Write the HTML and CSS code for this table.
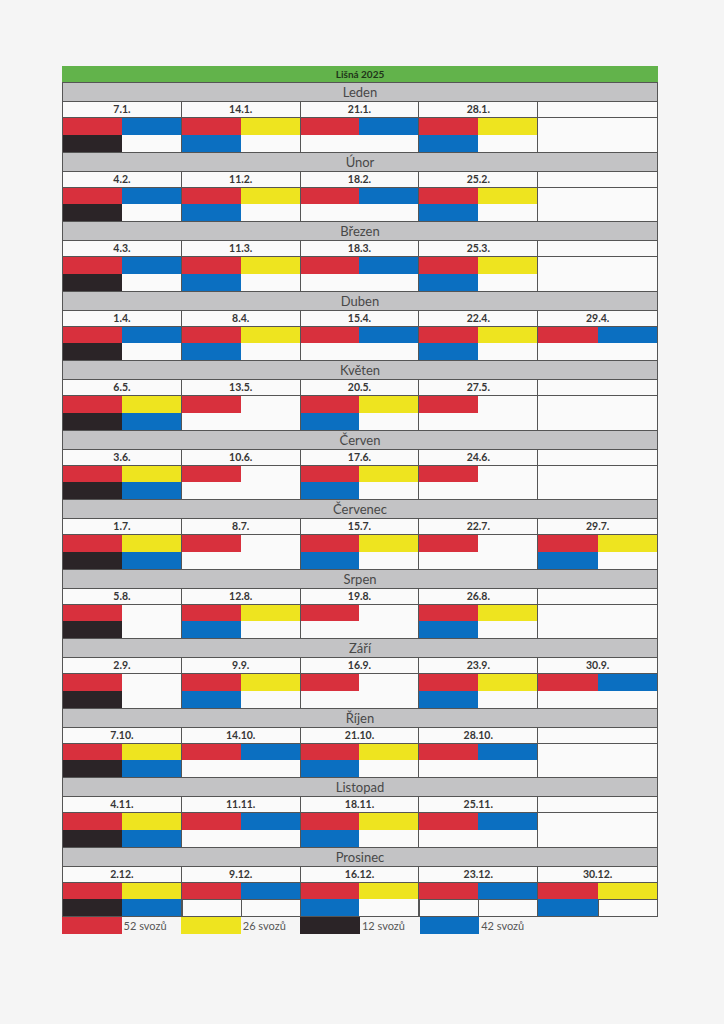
FILE: index.html
```html
<!DOCTYPE html>
<html lang="cs">
<head>
<meta charset="utf-8">
<title>Lišná 2025</title>
<link rel="stylesheet" href="styles.css">
</head>
<body>
<div class="page">
  <div class="title">Lišná 2025</div>
  <div class="sheet">

    <div class="mhead">Leden</div>
    <div class="days">
      <div class="day"><div class="date">7.1.</div><div class="sw"><i class="r"></i><i class="b"></i><i class="k"></i><i></i></div></div>
      <div class="day"><div class="date">14.1.</div><div class="sw"><i class="r"></i><i class="y"></i><i class="b"></i><i></i></div></div>
      <div class="day"><div class="date">21.1.</div><div class="sw"><i class="r"></i><i class="b"></i><i></i><i></i></div></div>
      <div class="day"><div class="date">28.1.</div><div class="sw"><i class="r"></i><i class="y"></i><i class="b"></i><i></i></div></div>
      <div class="day"><div class="date"></div><div class="sw"><i></i><i></i><i></i><i></i></div></div>
    </div>

    <div class="mhead">Únor</div>
    <div class="days">
      <div class="day"><div class="date">4.2.</div><div class="sw"><i class="r"></i><i class="b"></i><i class="k"></i><i></i></div></div>
      <div class="day"><div class="date">11.2.</div><div class="sw"><i class="r"></i><i class="y"></i><i class="b"></i><i></i></div></div>
      <div class="day"><div class="date">18.2.</div><div class="sw"><i class="r"></i><i class="b"></i><i></i><i></i></div></div>
      <div class="day"><div class="date">25.2.</div><div class="sw"><i class="r"></i><i class="y"></i><i class="b"></i><i></i></div></div>
      <div class="day"><div class="date"></div><div class="sw"><i></i><i></i><i></i><i></i></div></div>
    </div>

    <div class="mhead">Březen</div>
    <div class="days">
      <div class="day"><div class="date">4.3.</div><div class="sw"><i class="r"></i><i class="b"></i><i class="k"></i><i></i></div></div>
      <div class="day"><div class="date">11.3.</div><div class="sw"><i class="r"></i><i class="y"></i><i class="b"></i><i></i></div></div>
      <div class="day"><div class="date">18.3.</div><div class="sw"><i class="r"></i><i class="b"></i><i></i><i></i></div></div>
      <div class="day"><div class="date">25.3.</div><div class="sw"><i class="r"></i><i class="y"></i><i class="b"></i><i></i></div></div>
      <div class="day"><div class="date"></div><div class="sw"><i></i><i></i><i></i><i></i></div></div>
    </div>

    <div class="mhead">Duben</div>
    <div class="days">
      <div class="day"><div class="date">1.4.</div><div class="sw"><i class="r"></i><i class="b"></i><i class="k"></i><i></i></div></div>
      <div class="day"><div class="date">8.4.</div><div class="sw"><i class="r"></i><i class="y"></i><i class="b"></i><i></i></div></div>
      <div class="day"><div class="date">15.4.</div><div class="sw"><i class="r"></i><i class="b"></i><i></i><i></i></div></div>
      <div class="day"><div class="date">22.4.</div><div class="sw"><i class="r"></i><i class="y"></i><i class="b"></i><i></i></div></div>
      <div class="day"><div class="date">29.4.</div><div class="sw"><i class="r"></i><i class="b"></i><i></i><i></i></div></div>
    </div>

    <div class="mhead">Květen</div>
    <div class="days">
      <div class="day"><div class="date">6.5.</div><div class="sw"><i class="r"></i><i class="y"></i><i class="k"></i><i class="b"></i></div></div>
      <div class="day"><div class="date">13.5.</div><div class="sw"><i class="r"></i><i></i><i></i><i></i></div></div>
      <div class="day"><div class="date">20.5.</div><div class="sw"><i class="r"></i><i class="y"></i><i class="b"></i><i></i></div></div>
      <div class="day"><div class="date">27.5.</div><div class="sw"><i class="r"></i><i></i><i></i><i></i></div></div>
      <div class="day"><div class="date"></div><div class="sw"><i></i><i></i><i></i><i></i></div></div>
    </div>

    <div class="mhead">Červen</div>
    <div class="days">
      <div class="day"><div class="date">3.6.</div><div class="sw"><i class="r"></i><i class="y"></i><i class="k"></i><i class="b"></i></div></div>
      <div class="day"><div class="date">10.6.</div><div class="sw"><i class="r"></i><i></i><i></i><i></i></div></div>
      <div class="day"><div class="date">17.6.</div><div class="sw"><i class="r"></i><i class="y"></i><i class="b"></i><i></i></div></div>
      <div class="day"><div class="date">24.6.</div><div class="sw"><i class="r"></i><i></i><i></i><i></i></div></div>
      <div class="day"><div class="date"></div><div class="sw"><i></i><i></i><i></i><i></i></div></div>
    </div>

    <div class="mhead">Červenec</div>
    <div class="days">
      <div class="day"><div class="date">1.7.</div><div class="sw"><i class="r"></i><i class="y"></i><i class="k"></i><i class="b"></i></div></div>
      <div class="day"><div class="date">8.7.</div><div class="sw"><i class="r"></i><i></i><i></i><i></i></div></div>
      <div class="day"><div class="date">15.7.</div><div class="sw"><i class="r"></i><i class="y"></i><i class="b"></i><i></i></div></div>
      <div class="day"><div class="date">22.7.</div><div class="sw"><i class="r"></i><i></i><i></i><i></i></div></div>
      <div class="day"><div class="date">29.7.</div><div class="sw"><i class="r"></i><i class="y"></i><i class="b"></i><i></i></div></div>
    </div>

    <div class="mhead">Srpen</div>
    <div class="days">
      <div class="day"><div class="date">5.8.</div><div class="sw"><i class="r"></i><i></i><i class="k"></i><i></i></div></div>
      <div class="day"><div class="date">12.8.</div><div class="sw"><i class="r"></i><i class="y"></i><i class="b"></i><i></i></div></div>
      <div class="day"><div class="date">19.8.</div><div class="sw"><i class="r"></i><i></i><i></i><i></i></div></div>
      <div class="day"><div class="date">26.8.</div><div class="sw"><i class="r"></i><i class="y"></i><i class="b"></i><i></i></div></div>
      <div class="day"><div class="date"></div><div class="sw"><i></i><i></i><i></i><i></i></div></div>
    </div>

    <div class="mhead">Září</div>
    <div class="days">
      <div class="day"><div class="date">2.9.</div><div class="sw"><i class="r"></i><i></i><i class="k"></i><i></i></div></div>
      <div class="day"><div class="date">9.9.</div><div class="sw"><i class="r"></i><i class="y"></i><i class="b"></i><i></i></div></div>
      <div class="day"><div class="date">16.9.</div><div class="sw"><i class="r"></i><i></i><i></i><i></i></div></div>
      <div class="day"><div class="date">23.9.</div><div class="sw"><i class="r"></i><i class="y"></i><i class="b"></i><i></i></div></div>
      <div class="day"><div class="date">30.9.</div><div class="sw"><i class="r"></i><i class="b"></i><i></i><i></i></div></div>
    </div>

    <div class="mhead">Říjen</div>
    <div class="days">
      <div class="day"><div class="date">7.10.</div><div class="sw"><i class="r"></i><i class="y"></i><i class="k"></i><i class="b"></i></div></div>
      <div class="day"><div class="date">14.10.</div><div class="sw"><i class="r"></i><i class="b"></i><i></i><i></i></div></div>
      <div class="day"><div class="date">21.10.</div><div class="sw"><i class="r"></i><i class="y"></i><i class="b"></i><i></i></div></div>
      <div class="day"><div class="date">28.10.</div><div class="sw"><i class="r"></i><i class="b"></i><i></i><i></i></div></div>
      <div class="day"><div class="date"></div><div class="sw"><i></i><i></i><i></i><i></i></div></div>
    </div>

    <div class="mhead">Listopad</div>
    <div class="days">
      <div class="day"><div class="date">4.11.</div><div class="sw"><i class="r"></i><i class="y"></i><i class="k"></i><i class="b"></i></div></div>
      <div class="day"><div class="date">11.11.</div><div class="sw"><i class="r"></i><i class="b"></i><i></i><i></i></div></div>
      <div class="day"><div class="date">18.11.</div><div class="sw"><i class="r"></i><i class="y"></i><i class="b"></i><i></i></div></div>
      <div class="day"><div class="date">25.11.</div><div class="sw"><i class="r"></i><i class="b"></i><i></i><i></i></div></div>
      <div class="day"><div class="date"></div><div class="sw"><i></i><i></i><i></i><i></i></div></div>
    </div>

    <div class="mhead">Prosinec</div>
    <div class="days">
      <div class="day"><div class="date">2.12.</div><div class="sw"><i class="r"></i><i class="y"></i><i class="k"></i><i class="b"></i></div></div>
      <div class="day"><div class="date">9.12.</div><div class="sw"><i class="r"></i><i class="b"></i><i class="bx"></i><i class="bx"></i></div></div>
      <div class="day"><div class="date">16.12.</div><div class="sw"><i class="r"></i><i class="y"></i><i class="b"></i><i></i></div></div>
      <div class="day"><div class="date">23.12.</div><div class="sw"><i class="r"></i><i class="b"></i><i class="bx"></i><i class="bx"></i></div></div>
      <div class="day"><div class="date">30.12.</div><div class="sw"><i class="r"></i><i class="y"></i><i class="b"></i><i class="bx"></i></div></div>
    </div>

  </div>
  <div class="legend">
    <i class="r"></i><span>52 svozů</span>
    <i class="y"></i><span>26 svozů</span>
    <i class="k"></i><span>12 svozů</span>
    <i class="b"></i><span>42 svozů</span>
  </div>
</div>
</body>
</html>
```

FILE: styles.css
```css
body {
  margin: 0;
  background: #f5f5f5;
  font-family: Lato, "Liberation Sans", sans-serif;
}

.page {
  padding: 66px 0 0 62px;
}

.title {
  width: 596px;
  height: 16px;
  background: #62b34b;
  color: #1f3519;
  font-weight: 700;
  font-size: 10px;
  line-height: 16px;
  text-align: center;
}

.sheet {
  width: 596px;
  box-sizing: border-box;
  border-left: 1px solid #555;
  border-right: 1px solid #555;
  border-bottom: 1px solid #555;
}

.mhead {
  height: 18px;
  border-top: 1px solid #555;
  background: #c3c3c5;
  color: #484848;
  font-size: 13px;
  line-height: 18px;
  text-align: center;
}

.days {
  display: grid;
  grid-template-columns: repeat(5, 1fr);
  border-top: 1px solid #555;
  background: #fafafa;
}

.day {
  border-right: 1px solid #555;
}

.day:last-child {
  border-right: 0;
}

.date {
  height: 15px;
  border-bottom: 1px solid #555;
  color: #363636;
  font-size: 10.5px;
  font-weight: 700;
  line-height: 15px;
  text-align: center;
}

.sw {
  display: grid;
  grid-template-columns: 1fr 1fr;
  grid-template-rows: 16.75px 16.75px;
}

.sw i,
.legend i {
  display: block;
}

.r { background: #d8303d; }
.y { background: #eee41f; }
.b { background: #0b6fc1; }
.k { background: #2b2427; }

.sw i.bx {
  box-shadow: inset 1px 1px 0 #555;
}

.legend {
  display: grid;
  grid-template-columns: repeat(10, 59.6px);
  grid-template-rows: 17px;
  width: 596px;
}

.legend span {
  padding-left: 2px;
  color: #555;
  font-size: 11px;
  line-height: 17px;
}
```
